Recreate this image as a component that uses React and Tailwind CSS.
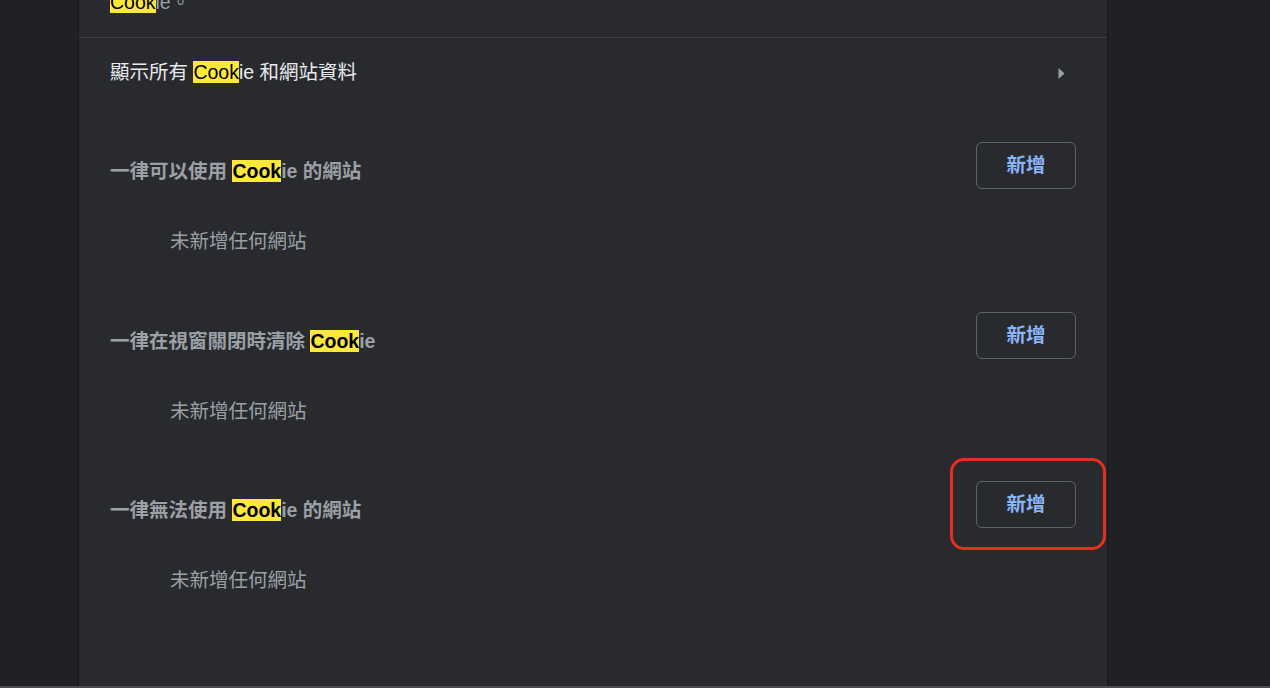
import React from 'react';

const font = { fontFamily: '"Liberation Sans", "Noto Sans CJK TC", sans-serif' };

function Hl({ children }) {
    return <span className="bg-[#fce83a] text-black">{children}</span>;
}

function AddButton({ marked }) {
    return (
        <div className="relative">
            {marked && (
                <div className="absolute -left-[26px] -right-[30px] -top-[23px] -bottom-[22px] border-[3px] border-[#e5301f] rounded-[14px]" />
            )}
            <button className="w-[100px] h-[47px] rounded-[6px] border border-[#5f6368] text-[#8ab4f8] text-[19.5px] font-semibold flex items-center justify-center">
                新增
            </button>
        </div>
    );
}

function Section({ title, marked, className }) {
    return (
        <div className={className}>
            <div className="flex items-start justify-between">
                <div className="mt-[17px] leading-[24px] text-[#9aa0a6] font-semibold">{title}</div>
                <AddButton marked={marked} />
            </div>
            <div className="mt-[40px] pl-[60px] leading-[24px] text-[#9aa0a6]">未新增任何網站</div>
        </div>
    );
}

export default function App() {
    return (
        <div className="h-[688px] bg-[#202124] overflow-hidden flex flex-col text-[19.5px]" style={font}>
            <div className="flex-1 flex">
                <div className="ml-[79px] w-[1028px] bg-[#292a2d] shadow-[0_0_2px_rgba(0,0,0,0.6)] flex flex-col">
                    <div className="h-[38px] shrink-0 border-b border-[#3c3d41] px-[31px] flex flex-col">
                        <div className="-mt-[10px] leading-[24px] text-[#9aa0a6]"><Hl>Cook</Hl>ie。</div>
                    </div>
                    <div className="h-[70px] shrink-0 pl-[31px] pr-[42px] flex items-center justify-between">
                        <div className="text-[#e8eaed]">顯示所有 <Hl>Cook</Hl>ie 和網站資料</div>
                        <svg width="7" height="11" viewBox="0 0 7 11" className="text-[#9aa0a6]">
                            <path d="M0.5 0 L6.5 5.5 L0.5 11 Z" fill="currentColor" />
                        </svg>
                    </div>
                    <div className="px-[31px]">
                        <Section className="mt-[34px]" title={<>一律可以使用 <Hl>Cook</Hl>ie 的網站</>} />
                        <Section className="mt-[59px]" title={<>一律在視窗關閉時清除 <Hl>Cook</Hl>ie</>} />
                        <Section className="mt-[58px]" marked title={<>一律無法使用 <Hl>Cook</Hl>ie 的網站</>} />
                    </div>
                </div>
            </div>
            <div className="h-[2px] bg-[#4a4b4f]" />
        </div>
    );
}
